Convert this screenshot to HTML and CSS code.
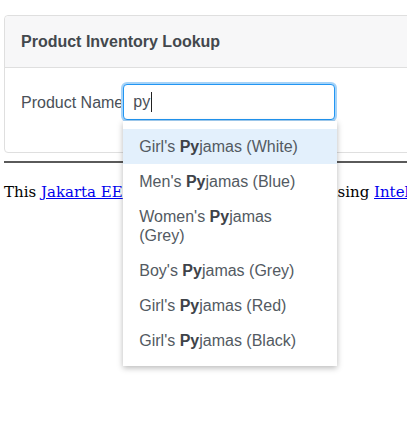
FILE: index.html
```html
<!DOCTYPE html>
<html>
<head>
<meta charset="utf-8">
<title>Product Inventory Lookup</title>
<link rel="stylesheet" href="styles.css">
</head>
<body>
<div class="page">
  <div class="card">
    <div class="card-header">Product Inventory Lookup</div>
    <div class="card-body">
      <div class="form-row">
        <label class="label">Product Name</label>
        <div class="field">
          <div class="input" role="textbox">py<span class="caret"></span></div>
          <ul class="suggestions">
            <li class="item active">Girl's <b>Py</b>jamas (White)</li>
            <li class="item">Men's <b>Py</b>jamas (Blue)</li>
            <li class="item">Women's <b>Py</b>jamas (Grey)</li>
            <li class="item">Boy's <b>Py</b>jamas (Grey)</li>
            <li class="item">Girl's <b>Py</b>jamas (Red)</li>
            <li class="item">Girl's <b>Py</b>jamas (Black)</li>
          </ul>
        </div>
      </div>
    </div>
  </div>
  <hr class="rule">
  <p class="note">This <a href="#">Jakarta EE</a> application was produced using <a href="#">IntelliJ IDEA</a>.</p>
</div>
</body>
</html>
```
FILE: styles.css
```css
html {
  overflow: hidden;
}
body {
  margin: 0;
  padding: 0;
  min-height: 430px;
  background: #fff;
}
.page {
  width: 700px;
  min-height: 430px;
  padding: 15px 0 0 4px;
}
.card {
  border: 1px solid #dfdfdf;
  border-radius: 4px;
  font-family: "Liberation Sans", Arial, sans-serif;
  font-size: 16px;
  color: #495057;
}
.card-header {
  background: #f7f7f8;
  border-bottom: 1px solid #dfdfdf;
  padding: 16px;
  line-height: 19px;
  font-weight: bold;
  color: #43484d;
  border-radius: 4px 4px 0 0;
}
.card-body {
  padding: 16px;
}
.form-row {
  display: flex;
  align-items: center;
  height: 36px;
  margin-bottom: 16px;
}
.label {
  color: #495057;
  line-height: 19px;
}
.field {
  position: relative;
}
.input {
  box-sizing: border-box;
  width: 212px;
  height: 36px;
  border: 1px solid #2196f3;
  border-radius: 4px;
  box-shadow: 0 0 0 2px #a6d3f8;
  padding: 0 9px;
  display: flex;
  align-items: center;
  color: #495057;
  background: #fff;
}
.caret {
  display: inline-block;
  width: 1px;
  height: 20px;
  background: #222;
  margin-left: 1px;
}
.suggestions {
  position: absolute;
  left: 0;
  top: 37px;
  width: 214px;
  margin: 0;
  padding: 8px 0;
  list-style: none;
  background: #fff;
  box-shadow: 0 2px 6px rgba(0, 0, 0, 0.28);
  z-index: 10;
}
.item {
  padding: 8px 16px;
  line-height: 19px;
  color: #535a62;
}
.item b {
  color: #3e4349;
}
.item.active {
  background: #e3f0fc;
}
.rule {
  margin: 8px 0 0;
  border: 0;
  border-top: 2px solid #5a5a5a;
}
.note {
  margin: 20px 0 16px;
  font-family: "DejaVu Serif", serif;
  font-size: 15px;
  white-space: nowrap;
  color: #000;
}
.note a {
  color: #0000ee;
}
```
